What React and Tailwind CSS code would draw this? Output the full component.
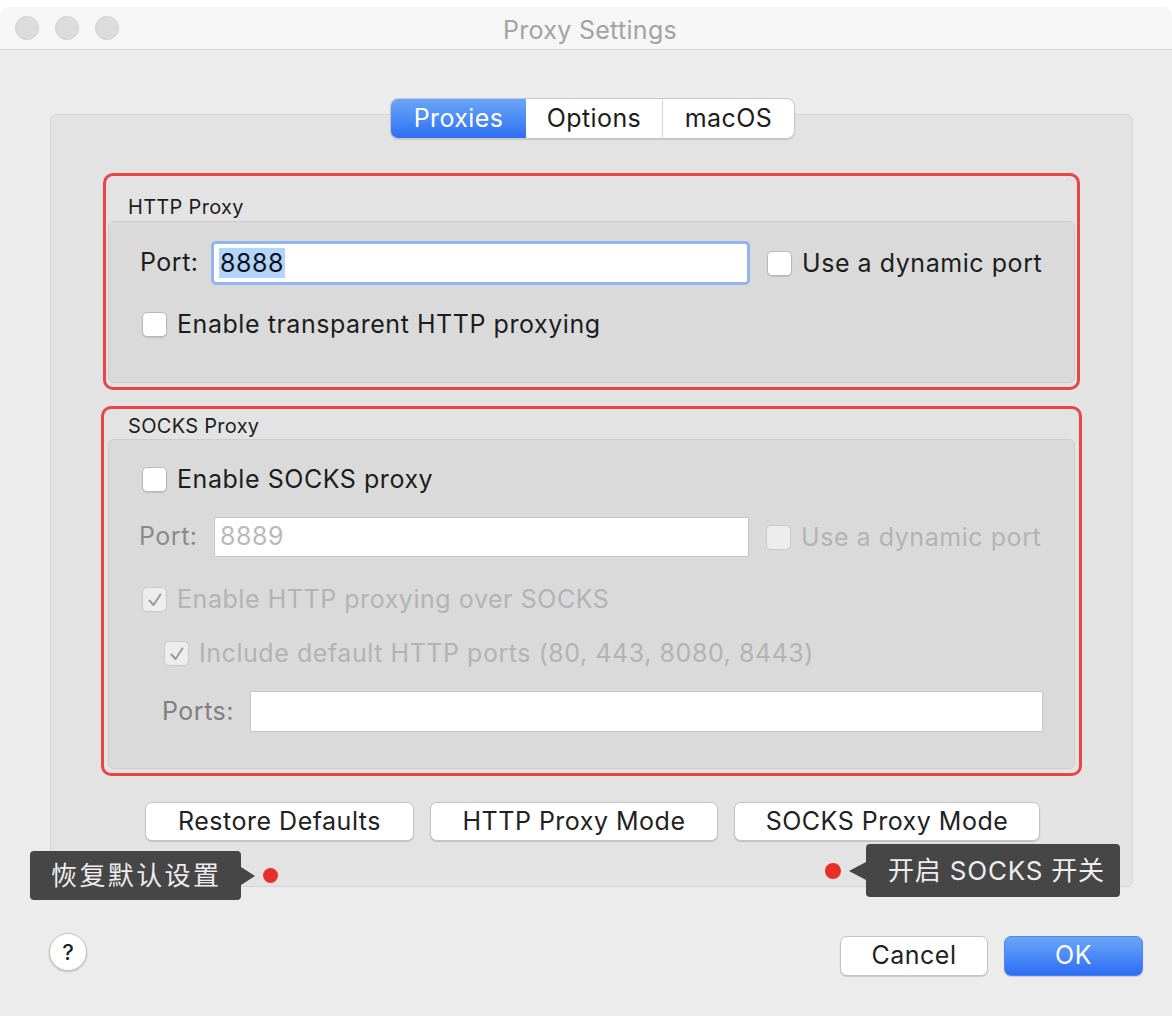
const font = { fontFamily: 'Inter, "Noto Sans CJK SC", sans-serif' };

const Checkbox = ({ checked = false, disabled = false }) => (
  <span
    className={`flex h-[25px] w-[25px] shrink-0 items-center justify-center rounded-[5px] border ${
      disabled ? 'border-[#c9c9c9] bg-[#ededed]' : 'border-[#b9b9b9] bg-white shadow-[0_1px_1px_rgba(0,0,0,0.12)]'
    }`}
  >
    {checked && (
      <svg width="18" height="18" viewBox="0 0 18 18">
        <path d="M3.5 9.5 L7.5 14 L14.5 3.5" fill="none" stroke={disabled ? '#9a9a9a' : '#333'} strokeWidth="2" strokeLinecap="round" strokeLinejoin="round" />
      </svg>
    )}
  </span>
);

const CheckRow = ({ label, checked, disabled, className = '' }) => (
  <div className={`flex items-center gap-[10px] ${className}`}>
    <Checkbox checked={checked} disabled={disabled} />
    <span className={`text-[25px] leading-none tracking-[0.55px] ${disabled ? 'text-[#b3b3b3]' : 'text-[#1d1d1d]'}`}>{label}</span>
  </div>
);

const PushButton = ({ children, className = '' }) => (
  <button className={`flex h-[39px] items-center justify-center rounded-[7px] border border-[#c4c4c4] bg-white text-[25px] tracking-[0.5px] text-[#222] shadow-[0_1px_1px_rgba(0,0,0,0.15)] ${className}`}>
    {children}
  </button>
);

export default function App() {
  return (
    <div className="h-[1016px] w-[1172px] overflow-hidden bg-white" style={font}>
      <div className="mt-[7px] flex h-[1009px] flex-col rounded-t-[10px] bg-[#ececec]">
        {/* title bar */}
        <div className="relative flex h-[43px] shrink-0 items-center rounded-t-[10px] border-b border-[#d4d4d4] bg-[#f6f6f6]">
          <div className="ml-[15px] flex gap-[16px]">
            {[0, 1, 2].map((i) => (
              <span key={i} className="h-[24px] w-[24px] rounded-full border border-[#d0d0d0] bg-[#dcdcdc]" />
            ))}
          </div>
          <span className="absolute left-[8px] right-0 top-[7px] text-center text-[25px] leading-[32px] tracking-[0.3px] text-[#a3a3a3]">Proxy Settings</span>
        </div>

        <div className="relative flex-1">
          {/* tabs */}
          <div className="relative z-10 mt-[48px] flex justify-center pl-[13px]">
            <div className="flex h-[41px] overflow-hidden rounded-[8px] border border-[#c6c6c6] bg-white text-[25px] tracking-[0.4px] shadow-[0_1px_1px_rgba(0,0,0,0.12)]">
              <span className="flex w-[135px] items-center justify-center bg-gradient-to-b from-[#6aa6f8] to-[#2f6ef2] text-white">Proxies</span>
              <span className="flex w-[137px] items-center justify-center border-r border-[#d6d6d6] text-[#1d1d1d]">Options</span>
              <span className="flex w-[131px] items-center justify-center text-[#1d1d1d]">macOS</span>
            </div>
          </div>

          {/* tab panel */}
          <div className="ml-[50px] -mt-[25px] w-[1083px] rounded-[6px] border border-[#d6d6d6] bg-[#e3e3e3] pt-[58px] pb-[45px]">
            {/* HTTP proxy */}
            <div className="ml-[52px] w-[977px] rounded-[10px] border-[3px] border-[#eb4448]">
              <div className="px-[22px] pt-[21px] pb-[4px] text-[20px] leading-[20px] tracking-[0.3px] text-[#1d1d1d]">HTTP Proxy</div>
              <div className="mx-[2px] mb-[4px] h-[162px] rounded-[6px] border border-[#cdcdcd] bg-[#dadada] pt-[19px] pl-[31px]">
                <div className="flex items-center">
                  <span className="w-[71px] text-[25px] tracking-[0.5px] text-[#1d1d1d]">Port:</span>
                  <div className="flex h-[44px] w-[539px] items-center rounded-[5px] border-[3px] border-[#8fb6ee] bg-white pl-[5px]">
                    <span className="bg-[#b3d4fd] px-[1px] text-[25px] leading-[30px] tracking-[0.5px] text-[#111]">8888</span>
                  </div>
                  <CheckRow label="Use a dynamic port" className="ml-[17px]" />
                </div>
                <CheckRow label="Enable transparent HTTP proxying" className="mt-[27px] ml-[2px]" />
              </div>
            </div>

            {/* SOCKS proxy */}
            <div className="mt-[16px] ml-[50px] w-[981px] rounded-[10px] border-[3px] border-[#eb4448]">
              <div className="px-[24px] pt-[7px] pb-[3px] text-[20px] leading-[20px] tracking-[0.3px] text-[#1d1d1d]">SOCKS Proxy</div>
              <div className="mx-[4px] mb-[4px] h-[330px] rounded-[6px] border border-[#cdcdcd] bg-[#dadada] pt-[27px] pl-[33px]">
                <CheckRow label="Enable SOCKS proxy" />
                <div className="mt-[25px] flex items-center">
                  <span className="-ml-[3px] w-[75px] text-[25px] tracking-[0.5px] text-[#8a8a8a]">Port:</span>
                  <div className="flex h-[40px] w-[535px] items-center border border-[#c6c6c6] bg-white pl-[5px] text-[25px] tracking-[0.5px] text-[#b9b9b9]">8889</div>
                  <CheckRow label="Use a dynamic port" disabled className="ml-[17px]" />
                </div>
                <CheckRow label="Enable HTTP proxying over SOCKS" checked disabled className="mt-[30px]" />
                <CheckRow label="Include default HTTP ports (80, 443, 8080, 8443)" checked disabled className="mt-[29px] ml-[22px]" />
                <div className="mt-[25px] flex items-center pl-[20px]">
                  <span className="w-[88px] text-[25px] tracking-[0.5px] text-[#808080]">Ports:</span>
                  <div className="h-[41px] w-[793px] border border-[#c6c6c6] bg-white" />
                </div>
              </div>
            </div>

            {/* mode buttons */}
            <div className="mt-[26px] flex justify-center gap-[16px] pl-[2px]">
              <PushButton className="w-[269px]">Restore Defaults</PushButton>
              <PushButton className="w-[288px]">HTTP Proxy Mode</PushButton>
              <PushButton className="w-[306px]">SOCKS Proxy Mode</PushButton>
            </div>
          </div>

          {/* bottom row */}
          <div className="mt-[46px] flex items-start pl-[49px] pr-[29px]">
            <span className="flex h-[38px] w-[38px] items-center justify-center rounded-full border border-[#c4c4c4] bg-white text-[22px] font-medium text-[#222] shadow-[0_1px_2px_rgba(0,0,0,0.2)]">?</span>
            <div className="mt-[3px] ml-auto flex gap-[16px]">
              <PushButton className="!h-[40px] w-[148px]">Cancel</PushButton>
              <button className="h-[40px] w-[139px] rounded-[7px] border border-[#4a86f0] bg-gradient-to-b from-[#6aa6f8] to-[#2d6cf3] text-[25px] tracking-[0.5px] text-white shadow-[0_1px_1px_rgba(0,0,0,0.15)]">OK</button>
            </div>
          </div>

          {/* annotations */}
          <div className="absolute left-[30px] top-[801px] flex items-center">
            <div className="flex h-[49px] w-[211px] items-center rounded-[4px] bg-[#464646] pl-[21px] text-[26px] tracking-[2.4px] text-[#ededed]">恢复默认设置</div>
            <span className="h-0 w-0 border-y-[9px] border-l-[14px] border-y-transparent border-l-[#464646]" />
            <span className="ml-[8px] h-[15px] w-[15px] rounded-full bg-[#e8302a]" />
          </div>
          <div className="absolute left-[825px] top-[794px] flex items-center">
            <span className="h-[16px] w-[16px] rounded-full bg-[#e8302a]" />
            <span className="ml-[8px] h-0 w-0 border-y-[9px] border-r-[17px] border-y-transparent border-r-[#464646]" />
            <div className="flex h-[53px] w-[254px] items-center rounded-[4px] bg-[#464646] pl-[22px] text-[26px] tracking-[0.8px] text-[#ededed]">开启 SOCKS 开关</div>
          </div>
        </div>
      </div>
    </div>
  );
}
